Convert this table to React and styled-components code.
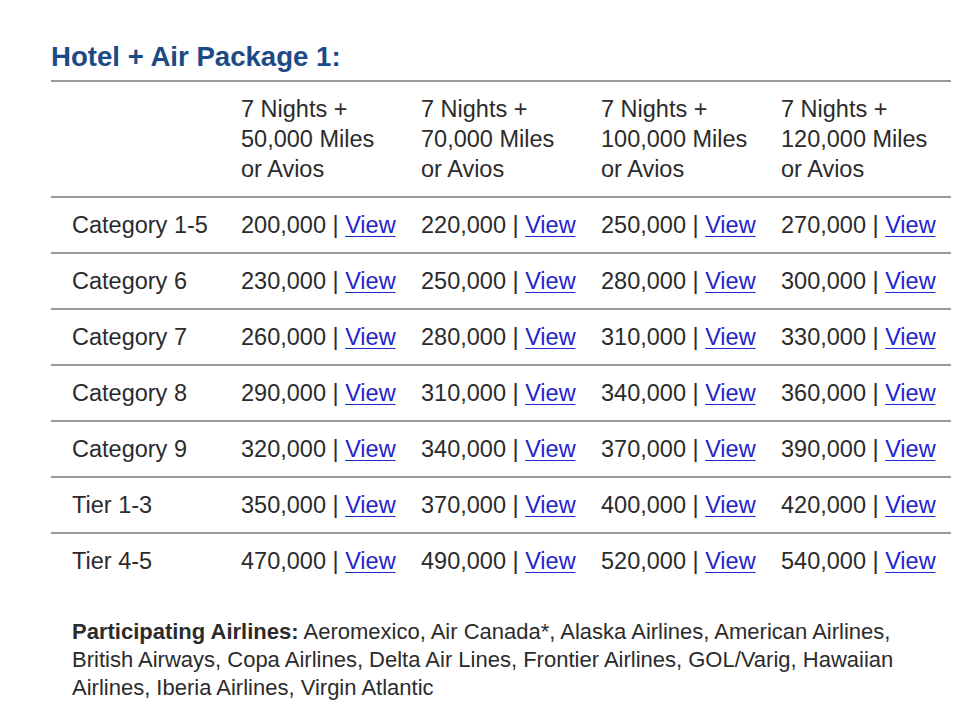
import React from 'react'
import styled, { createGlobalStyle } from 'styled-components'

const GlobalStyle = createGlobalStyle`
    body {
        margin: 0;
        background: #fff;
        font-family: "Liberation Sans", Arial, sans-serif;
        color: #2b2b2b;
    }
`

const Page = styled.div`
    padding: 41px 0 20px 51px;
`

const Title = styled.h2`
    margin: 0 0 7px 0;
    font-size: 27.6px;
    line-height: 32px;
    font-weight: bold;
    color: #1c4a85;
`

const Table = styled.div`
    width: 900px;
    display: grid;
    grid-template-columns: repeat(5, 180px);
    border-top: 2px solid #999;
`

const Cell = styled.div`
    padding: 12px 0 12px ${props => props.first ? '21px' : '10px'};
    font-size: 23.5px;
    line-height: 30px;
    color: #2b2b2b;
    white-space: nowrap;
    border-bottom: ${props => props.last ? 'none' : '2px solid #999'};
`

const Link = styled.a`
    color: #2424cc;
    text-decoration: underline;
    text-decoration-thickness: 1px;
    text-underline-offset: 3px;
`

const Footer = styled.p`
    margin: 30px 0 0 0;
    padding-left: 21px;
    width: 860px;
    font-size: 22px;
    line-height: 28px;
    color: #2b2b2b;
`

const Label = styled.strong`
    font-weight: bold;
`

const heads = ['50,000', '70,000', '100,000', '120,000']

const rows = [
    ['Category 1-5', ['200,000', '220,000', '250,000', '270,000']],
    ['Category 6', ['230,000', '250,000', '280,000', '300,000']],
    ['Category 7', ['260,000', '280,000', '310,000', '330,000']],
    ['Category 8', ['290,000', '310,000', '340,000', '360,000']],
    ['Category 9', ['320,000', '340,000', '370,000', '390,000']],
    ['Tier 1-3', ['350,000', '370,000', '400,000', '420,000']],
    ['Tier 4-5', ['470,000', '490,000', '520,000', '540,000']],
]

export default function App() {
    return (
        <Page>
            <GlobalStyle />
            <Title>Hotel + Air Package 1:</Title>
            <Table>
                <Cell first />
                {heads.map(h => (
                    <Cell key={h}>
                        7 Nights +<br />
                        {h} Miles<br />
                        or Avios
                    </Cell>
                ))}
                {rows.map(([label, vals], i) => {
                    const last = i === rows.length - 1
                    return (
                        <React.Fragment key={label}>
                            <Cell first last={last}>{label}</Cell>
                            {vals.map((v, j) => (
                                <Cell key={j} last={last}>
                                    {v} | <Link href="#">View</Link>
                                </Cell>
                            ))}
                        </React.Fragment>
                    )
                })}
            </Table>
            <Footer>
                <Label>Participating Airlines:</Label> Aeromexico, Air Canada*, Alaska Airlines, American Airlines,
                British Airways, Copa Airlines, Delta Air Lines, Frontier Airlines, GOL/Varig, Hawaiian
                Airlines, Iberia Airlines, Virgin Atlantic
            </Footer>
        </Page>
    )
}
